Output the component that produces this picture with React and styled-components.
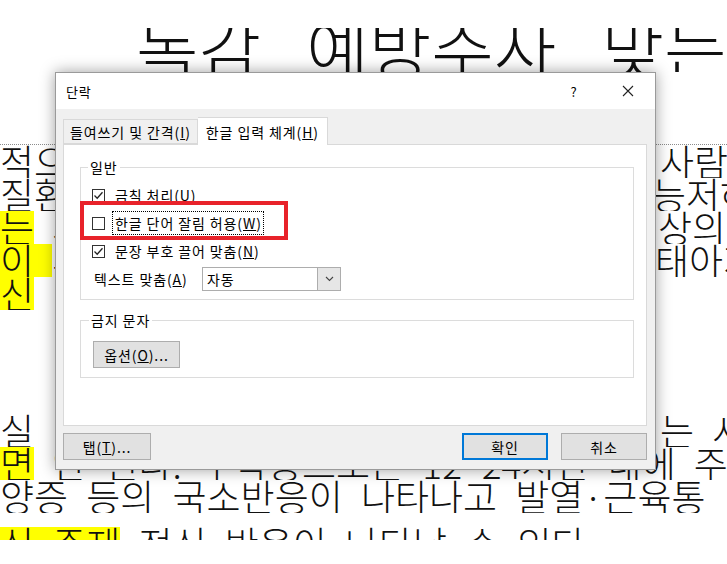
import React from 'react';
import styled, { createGlobalStyle } from 'styled-components';

const GlobalStyle = createGlobalStyle`
  html, body {
    margin: 0;
    padding: 0;
    background: #fff;
  }
  body {
    font-family: "Noto Sans CJK KR", "Noto Sans", sans-serif;
  }
`;

const Page = styled.div`
  position: relative;
  width: 727px;
  height: 564px;
  overflow: hidden;
  background: #fff;
`;

const Doc = styled.div`
  height: 540px;
  overflow: hidden;
  font-family: "Noto Sans CJK KR", sans-serif;
  font-weight: 300;
  color: #111;
`;

const TitleClip = styled.div`
  margin-top: 28px;
  height: 44px;
  overflow: hidden;
`;

const Title = styled.div`
  margin: -15px 0 0 136px;
  font-size: 68px;
  line-height: 68px;
  white-space: nowrap;
  word-spacing: 30px;
`;

const Body = styled.div`
  margin-top: 72px;
  border-top: 1px dotted #8c8c8c;
  font-size: 37px;
  line-height: 33px;
  word-spacing: 10px;
`;

const Line = styled.div`
  display: grid;
  grid-template-columns: 652px 1fr;
  white-space: nowrap;
  overflow: hidden;
  height: 33px;
`;

const Cell = styled.div`
  overflow: hidden;
`;

const RightCell = styled.div`
  padding-left: ${p => p.$indent || 0}px;
`;

const FullLine = styled.div`
  white-space: nowrap;
  overflow: hidden;
  height: 33px;
  margin-top: ${p => p.$top || 0}px;
`;

const Gap = styled.div`
  height: ${p => p.$h}px;
`;

const Mark = styled.span`
  background: #ffff00;
`;

/* ---------- dialog ---------- */

const Dialog = styled.div`
  position: absolute;
  left: 55px;
  top: 72px;
  width: 599px;
  height: 396px;
  background: #f0f0f0;
  border: 1px solid #9a9a9a;
  box-shadow: 0 0 14px rgba(0, 0, 0, 0.38);
  display: flex;
  flex-direction: column;
  font-family: "Noto Sans CJK KR", sans-serif;
  font-size: 14px;
  color: #000;
  letter-spacing: 0.9px;
`;

const TitleBar = styled.div`
  height: 36px;
  background: #fff;
  display: flex;
  align-items: center;
  padding-left: 10px;
  font-size: 13px;
`;

const TitleText = styled.div`
  flex: 1;
`;

const TitleButton = styled.div`
  width: 54px;
  height: 36px;
  display: flex;
  align-items: center;
  justify-content: center;
`;

const DialogBody = styled.div`
  flex: 1;
  display: flex;
  flex-direction: column;
  padding: 8px 8px 10px 7px;
`;

const TabStrip = styled.div`
  display: flex;
  align-items: flex-end;
  height: 27px;
  position: relative;
  z-index: 1;
`;

const Tab = styled.div`
  height: ${p => (p.$active ? 27 : 23)}px;
  margin-bottom: ${p => (p.$active ? -1 : 0)}px;
  padding: 0 ${p => (p.$active ? 8 : 6)}px;
  display: flex;
  align-items: center;
  background: ${p => (p.$active ? '#fff' : '#f0f0f0')};
  border: 1px solid #d9d9d9;
  border-bottom: ${p => (p.$active ? 'none' : '1px solid #d9d9d9')};
  border-left: ${p => (p.$active ? 'none' : '1px solid #d9d9d9')};
`;

const Panel = styled.div`
  height: 282px;
  box-sizing: border-box;
  background: #fff;
  border: 1px solid #d9d9d9;
  padding: 14px 12px 0 16px;
  display: flex;
  flex-direction: column;
  gap: 12px;
`;

const Group = styled.fieldset`
  margin: 0;
  border: 1px solid #dcdcdc;
  padding: ${p => p.$pad};
  min-width: 0;
`;

const Legend = styled.legend`
  margin-left: -4px;
  padding: 0 2px;
  line-height: 17px;
  color: #000;
`;

const Row = styled.div`
  position: relative;
  height: 28px;
  display: flex;
  align-items: center;
  gap: 10px;
`;

const Box = styled.span`
  width: 13px;
  height: 13px;
  box-sizing: border-box;
  border: 1px solid #333;
  background: #fff;
  display: flex;
  flex-shrink: 0;
`;

const Focus = styled.span`
  border: 1px dotted #000;
  padding: 1px 1px 1px 2px;
  margin-left: -3px;
  line-height: 20px;
`;

const RedFrame = styled.div`
  position: absolute;
  left: -12px;
  top: -8px;
  width: 208px;
  height: 39px;
  box-sizing: border-box;
  border: 4px solid #e8222a;
  pointer-events: none;
`;

const SelectLabel = styled.span`
  width: 98px;
  padding-left: 2px;
  flex-shrink: 0;
`;

const Select = styled.div`
  width: 139px;
  height: 24px;
  box-sizing: border-box;
  border: 1px solid #adadad;
  background: #fff;
  display: flex;
  align-items: center;
`;

const SelectValue = styled.span`
  flex: 1;
  padding-left: 4px;
`;

const SelectArrow = styled.span`
  width: 22px;
  height: 22px;
  background: #e6e6e6;
  border-left: 1px solid #adadad;
  display: flex;
  align-items: center;
  justify-content: center;
`;

const Button = styled.div`
  width: ${p => p.$w || 87}px;
  height: 27px;
  box-sizing: border-box;
  background: #e1e1e1;
  border: 1px solid ${p => (p.$primary ? '#0078d7' : '#adadad')};
  box-shadow: ${p => (p.$primary ? 'inset 0 0 0 1px #0078d7' : 'none')};
  display: flex;
  align-items: center;
  justify-content: center;
`;

const Footer = styled.div`
  margin-top: 7px;
  display: flex;
  justify-content: space-between;
  align-items: center;
`;

const FooterRight = styled.div`
  display: flex;
  gap: 13px;
`;

const Check = () => (
  <svg width="11" height="11" viewBox="0 0 11 11">
    <polyline points="1.5,5.5 4.2,8.2 9.5,2.2" fill="none" stroke="#222" strokeWidth="1.3" />
  </svg>
);

function CheckRow({ checked, children, focus }) {
  return (
    <Row>
      <Box>{checked && <Check />}</Box>
      {focus ? <Focus>{children}</Focus> : <span>{children}</span>}
      {focus && <RedFrame />}
    </Row>
  );
}

export default function App() {
  return (
    <Page>
      <GlobalStyle />
      <Doc>
        <TitleClip>
          <Title>독감 예방주사 맞는</Title>
        </TitleClip>
        <Body>
          <Line>
            <Cell>적으로 건강한 성인도 맞는</Cell>
            <RightCell $indent={8}>사람</RightCell>
          </Line>
          <Line>
            <Cell>질환이 있거나 면역 기능이</Cell>
            <RightCell $indent={-2}>능저하</RightCell>
          </Line>
          <Line>
            <Cell><Mark>는</Mark> 사람, 65세 이상 노인</Cell>
            <RightCell $indent={6}>상의</RightCell>
          </Line>
          <Line>
            <Cell><Mark>이 </Mark>후 임신부와</Cell>
            <RightCell $indent={3}>태아지</RightCell>
          </Line>
          <Line>
            <Cell><Mark>신</Mark> 1회 접종을 권장한다</Cell>
            <RightCell />
          </Line>
          <Gap $h={104} />
          <Line>
            <Cell>실 미만 영아는 접종하</Cell>
            <RightCell $indent={8}>는 사</RightCell>
          </Line>
          <FullLine><Mark>면</Mark> 안 된다. 부작용으로는 12~24시간 내에 주사</FullLine>
          <FullLine>양증 등의 국소반응이 나타나고 발열·근육통</FullLine>
          <FullLine $top={14}><Mark>신 주제</Mark> 전신 반응이 나타날 수 있다</FullLine>
        </Body>
      </Doc>

      <Dialog>
        <TitleBar>
          <TitleText>단락</TitleText>
          <TitleButton>?</TitleButton>
          <TitleButton>
            <svg width="12" height="12" viewBox="0 0 12 12">
              <path d="M1 1 L11 11 M11 1 L1 11" stroke="#222" strokeWidth="1.1" />
            </svg>
          </TitleButton>
        </TitleBar>
        <DialogBody>
          <TabStrip>
            <Tab>들여쓰기 및 간격(<u>I</u>)</Tab>
            <Tab $active>한글 입력 체계(<u>H</u>)</Tab>
          </TabStrip>
          <Panel>
            <Group $pad="5px 11px 6px 11px">
              <Legend>일반</Legend>
              <CheckRow checked>금칙 처리(<u>U</u>)</CheckRow>
              <CheckRow focus>한글 단어 잘림 허용(<u>W</u>)</CheckRow>
              <CheckRow checked>문장 부호 끌어 맞춤(<u>N</u>)</CheckRow>
              <Row>
                <SelectLabel>텍스트 맞춤(<u>A</u>)</SelectLabel>
                <Select>
                  <SelectValue>자동</SelectValue>
                  <SelectArrow>
                    <svg width="9" height="6" viewBox="0 0 9 6">
                      <polyline points="1,1 4.5,4.5 8,1" fill="none" stroke="#444" strokeWidth="1.1" />
                    </svg>
                  </SelectArrow>
                </Select>
              </Row>
            </Group>
            <Group $pad="12px 11px 9px 12px">
              <Legend>금지 문자</Legend>
              <Button>옵션(<u>O</u>)...</Button>
            </Group>
          </Panel>
          <Footer>
            <Button $w={88}>탭(<u>T</u>)...</Button>
            <FooterRight>
              <Button $primary $w={86}>확인</Button>
              <Button $w={86}>취소</Button>
            </FooterRight>
          </Footer>
        </DialogBody>
      </Dialog>
    </Page>
  );
}
